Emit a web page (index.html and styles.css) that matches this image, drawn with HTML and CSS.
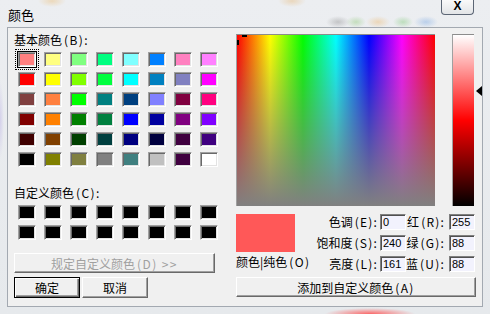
FILE: index.html
```html
<!DOCTYPE html>
<html lang="zh-CN">
  <head>
    <meta charset="UTF-8" />
    <title>颜色</title>
    <link rel="stylesheet" href="styles.css">
  </head>

  <body>
    <div class="window">
      <div class="titlebar">
        <span class="title">颜色</span>
        <span class="close">X</span>
      </div>

      <div class="client">
        <section class="left">
          <div class="label first">基本颜色<span class="k">(B):</span></div>
          <div class="grid">
            <span class="sw selected" style="background:#ff8080"></span>
            <span class="sw" style="background:#ffff80"></span>
            <span class="sw" style="background:#80ff80"></span>
            <span class="sw" style="background:#00ff80"></span>
            <span class="sw" style="background:#80ffff"></span>
            <span class="sw" style="background:#0080ff"></span>
            <span class="sw" style="background:#ff80c0"></span>
            <span class="sw" style="background:#ff80ff"></span>

            <span class="sw" style="background:#ff0000"></span>
            <span class="sw" style="background:#ffff00"></span>
            <span class="sw" style="background:#80ff00"></span>
            <span class="sw" style="background:#00ff40"></span>
            <span class="sw" style="background:#00ffff"></span>
            <span class="sw" style="background:#0080c0"></span>
            <span class="sw" style="background:#8080c0"></span>
            <span class="sw" style="background:#ff00ff"></span>

            <span class="sw" style="background:#804040"></span>
            <span class="sw" style="background:#ff8040"></span>
            <span class="sw" style="background:#00ff00"></span>
            <span class="sw" style="background:#008080"></span>
            <span class="sw" style="background:#004080"></span>
            <span class="sw" style="background:#8080ff"></span>
            <span class="sw" style="background:#800040"></span>
            <span class="sw" style="background:#ff0080"></span>

            <span class="sw" style="background:#800000"></span>
            <span class="sw" style="background:#ff8000"></span>
            <span class="sw" style="background:#008000"></span>
            <span class="sw" style="background:#008040"></span>
            <span class="sw" style="background:#0000ff"></span>
            <span class="sw" style="background:#0000a0"></span>
            <span class="sw" style="background:#800080"></span>
            <span class="sw" style="background:#8000ff"></span>

            <span class="sw" style="background:#400000"></span>
            <span class="sw" style="background:#804000"></span>
            <span class="sw" style="background:#004000"></span>
            <span class="sw" style="background:#004040"></span>
            <span class="sw" style="background:#000080"></span>
            <span class="sw" style="background:#000040"></span>
            <span class="sw" style="background:#400040"></span>
            <span class="sw" style="background:#400080"></span>

            <span class="sw" style="background:#000000"></span>
            <span class="sw" style="background:#808000"></span>
            <span class="sw" style="background:#808040"></span>
            <span class="sw" style="background:#808080"></span>
            <span class="sw" style="background:#408080"></span>
            <span class="sw" style="background:#c0c0c0"></span>
            <span class="sw" style="background:#400040"></span>
            <span class="sw" style="background:#ffffff"></span>
          </div>

          <div class="label custom-label">自定义颜色<span class="k">(C):</span></div>
          <div class="grid custom">
            <span class="sw"></span><span class="sw"></span><span class="sw"></span><span class="sw"></span>
            <span class="sw"></span><span class="sw"></span><span class="sw"></span><span class="sw"></span>
            <span class="sw"></span><span class="sw"></span><span class="sw"></span><span class="sw"></span>
            <span class="sw"></span><span class="sw"></span><span class="sw"></span><span class="sw"></span>
          </div>

          <div class="btn disabled">规定自定义颜色<span class="k">(D) &gt;&gt;</span></div>
          <div class="actions">
            <div class="btn default">确定</div>
            <div class="btn">取消</div>
          </div>
        </section>

        <section class="right">
          <div class="picker">
            <div class="spectrum">
              <span class="cross-h"></span>
              <span class="cross-v"></span>
            </div>
            <div class="lum"></div>
            <span class="arrow" style="margin-top:52px"></span>
          </div>

          <div class="lower">
            <div class="current">
              <div class="swatch-big"></div>
              <div class="label solid">颜色|纯色<span class="k">(O)</span></div>
            </div>
            <div class="fields">
              <span class="f">色调<span class="k">(E):</span></span><span class="in">0</span>
              <span class="f f2">红<span class="k">(R):</span></span><span class="in">255</span>
              <span class="f">饱和度<span class="k">(S):</span></span><span class="in">240</span>
              <span class="f f2">绿<span class="k">(G):</span></span><span class="in">88</span>
              <span class="f">亮度<span class="k">(L):</span></span><span class="in">161</span>
              <span class="f f2">蓝<span class="k">(U):</span></span><span class="in">88</span>
            </div>
          </div>

          <div class="btn add">添加到自定义颜色<span class="k">(A)</span></div>
        </section>
      </div>
    </div>
  </body>
</html>
```

FILE: styles.css
```css
* {
  box-sizing: border-box;
  margin: 0;
  padding: 0;
}

html,
body {
  width: 490px;
  height: 314px;
  overflow: hidden;
}

body {
  font-family: "Noto Sans CJK SC", sans-serif;
  font-size: 12px;
  color: #000;
  background:
    radial-gradient(ellipse 14px 6px at 52px 1px, rgba(235, 190, 120, 0.45), transparent),
    radial-gradient(ellipse 14px 6px at 292px 1px, rgba(230, 180, 110, 0.4), transparent),
    radial-gradient(ellipse 12px 6px at 338px 22px, rgba(120, 120, 120, 0.35), transparent),
    radial-gradient(ellipse 10px 6px at 356px 22px, rgba(120, 190, 90, 0.35), transparent),
    radial-gradient(ellipse 12px 6px at 378px 22px, rgba(235, 180, 100, 0.4), transparent),
    radial-gradient(ellipse 10px 6px at 403px 22px, rgba(100, 190, 90, 0.35), transparent),
    radial-gradient(ellipse 12px 6px at 426px 22px, rgba(110, 160, 225, 0.4), transparent),
    radial-gradient(ellipse 45px 6px at 370px 314px, rgba(255, 80, 80, 0.85), transparent),
    radial-gradient(ellipse 4px 40px at 0 120px, rgba(190, 180, 230, 0.5), transparent),
    linear-gradient(#eceef1, #e6e9ec);
}

.k {
  margin-left: 2px;
  letter-spacing: 1.4px;
}

.window {
  padding: 0 7px;
}

.titlebar {
  display: flex;
  justify-content: space-between;
  align-items: flex-start;
  height: 27px;
}

.title {
  margin: 7px 0 0 1px;
  font-size: 13px;
  line-height: 16px;
}

.close {
  width: 33px;
  height: 16px;
  margin: -1px 9px 0 0;
  border: 1px solid #5c6675;
  border-top: none;
  border-radius: 0 0 4px 4px;
  background: linear-gradient(#fbfbfb, #e2e4e7);
  font: bold 12px "Liberation Sans", sans-serif;
  line-height: 15px;
  text-align: center;
}

.client {
  display: flex;
  height: 280px;
  border: 1px solid #a3a9b1;
  background: #f0f0f0;
}

/* left half */
.left {
  width: 228px;
  padding-left: 6px;
}

.label {
  line-height: 14px;
  white-space: nowrap;
}

.label.first {
  margin-top: 5px;
}

.grid {
  display: grid;
  grid-template-columns: repeat(8, 18px);
  grid-auto-rows: 15px;
  column-gap: 8px;
  row-gap: 5px;
  margin: 5px 0 0 4px;
}

.sw {
  border: 1px solid;
  border-color: #a0a0a0 #fff #fff #a0a0a0;
  box-shadow: inset 1px 1px #696969, inset -1px -1px #e3e3e3;
}

.custom .sw {
  background: #000;
}

.sw.selected {
  outline: 1px dotted #000;
  outline-offset: 2px;
  box-shadow: 0 0 0 1px #000, inset 1px 1px #696969, inset -1px -1px #e3e3e3;
}

.custom-label {
  margin-top: 19px;
}

.btn {
  display: flex;
  align-items: center;
  justify-content: center;
  height: 20px;
  background: #f0f0f0;
  border: 1px solid;
  border-color: #fff #696969 #696969 #fff;
  box-shadow: inset -1px -1px #a0a0a0;
  white-space: nowrap;
}

.btn.disabled {
  width: 201px;
  margin-top: 13px;
  color: #a0a0a0;
}

.actions {
  display: flex;
  gap: 2px;
  margin-top: 4px;
}

.actions .btn {
  width: 66px;
  height: 21px;
}

.btn.default {
  border-color: #000;
  box-shadow: inset 1px 1px #fff, inset -1px -1px #696969, inset -2px -2px #a0a0a0;
}

/* right half */
.right {
  width: 246px;
  padding-top: 6px;
}

.picker {
  display: flex;
  align-items: flex-start;
  height: 172px;
}

.spectrum {
  position: relative;
  width: 199px;
  height: 172px;
  border-top: 1px solid #8c8c8c;
  border-left: 1px solid #a0a0a0;
  background:
    linear-gradient(to bottom, rgba(128, 128, 128, 0), #808080),
    linear-gradient(to right, #f00, #ff0 16.7%, #0f0 33.3%, #0ff 50%, #00f 66.7%, #f0f 83.3%, #f00);
}

.cross-h,
.cross-v {
  position: absolute;
  background: #000;
}

.cross-h {
  left: 5px;
  top: 0;
  width: 5px;
  height: 2px;
}

.cross-v {
  left: 0;
  top: 5px;
  width: 2px;
  height: 5px;
}

.lum {
  width: 22px;
  height: 172px;
  margin-left: 17px;
  border-top: 1px solid #8c8c8c;
  border-left: 1px solid #a0a0a0;
  background: linear-gradient(to bottom, #fff, #f00 50%, #000);
}

.arrow {
  width: 0;
  height: 0;
  margin-left: 2px;
  border-top: 5px solid transparent;
  border-bottom: 5px solid transparent;
  border-right: 6px solid #000;
}

.lower {
  display: flex;
  margin-top: 8px;
}

.current {
  width: 80px;
}

.swatch-big {
  width: 59px;
  height: 38px;
  background: #ff5858;
}

.label.solid {
  margin-top: 3px;
}

.fields {
  display: grid;
  grid-template-columns: 64px 26px 43px 26px;
  grid-auto-rows: 16px;
  row-gap: 5px;
}

.f {
  padding-right: 2px;
  line-height: 16px;
  text-align: right;
  white-space: nowrap;
}

.f2 {
  padding-right: 4px;
}

.f .k {
  letter-spacing: 1.2px;
}

.in {
  padding-left: 2px;
  border: 1px solid;
  border-color: #808080 #fff #fff #808080;
  box-shadow: inset 1px 1px #505050;
  background: #f2f2fd;
  font: 11px "Liberation Sans", sans-serif;
  line-height: 14px;
}

.btn.add {
  width: 240px;
  margin-top: 5px;
}
```
